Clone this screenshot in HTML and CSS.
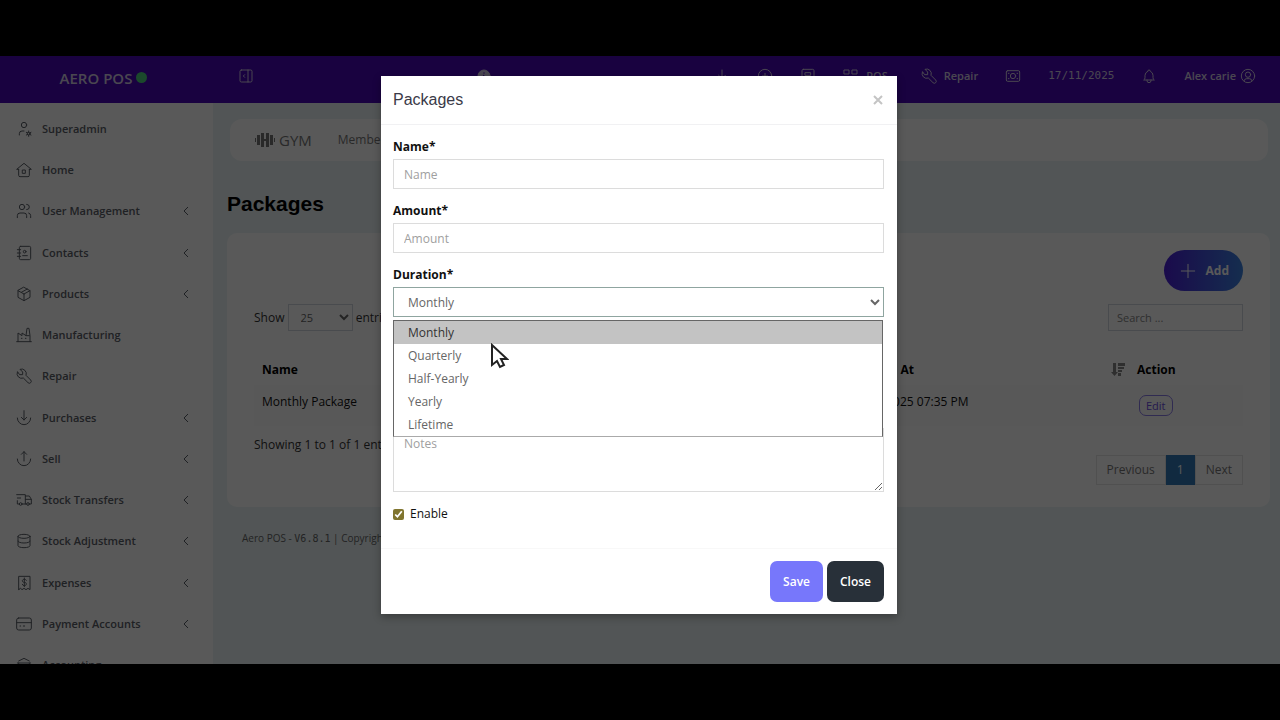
FILE: index.html
```html
<!DOCTYPE html>
<html lang="en">
<head>
<meta charset="utf-8">
<title>Packages - AERO POS</title>
<link rel="stylesheet" href="styles.css">
</head>
<body>
<div class="screen">
  <header class="topbar">
    <div class="brand">AERO POS<span class="status-dot"></span></div>
    <div class="topbar-main">
      <button class="top-btn" type="button" aria-label="Collapse menu"><svg class="icon" viewBox="0 0 24 24"><rect x="3" y="3" width="18" height="18" rx="2"/><path d="M15 3v18M10 10l-2 2l2 2"/></svg></button>
      <button class="top-btn info-btn" type="button" aria-label="Information"><svg class="icon" viewBox="0 0 24 24"><circle class="solid" cx="12" cy="12" r="9"/><path class="info-mark" d="M12 7v1M11 11h1v5M10 17h4"/></svg></button>
      <div class="tools">
        <button class="top-btn" type="button" aria-label="Download"><svg class="icon" viewBox="0 0 24 24"><path d="M12 3v13M7 11l5 5l5-5M4 20h16"/></svg></button>
        <button class="top-btn" type="button" aria-label="New"><svg class="icon" viewBox="0 0 24 24"><circle cx="12" cy="12" r="10"/><path d="M8 12h8M12 8v8"/></svg></button>
        <button class="top-btn" type="button" aria-label="Calculator"><svg class="icon" viewBox="0 0 24 24"><rect x="3" y="2" width="18" height="20" rx="2"/><path d="M8 7h8v4H8z"/></svg></button>
        <button class="top-btn pos-btn" type="button"><svg class="icon" viewBox="0 0 24 24"><path d="M2 3h7v6H2zM14 3h7v6h-7zM2 14h7v6H2zM14 14h7v6h-7z"/></svg>POS</button>
        <button class="top-btn" type="button"><svg class="icon" viewBox="0 0 24 24"><path d="M6 10h4V6L6 2a7 7 0 0 1 9 9l7 7a2 2 0 0 1-4 4l-7-7a7 7 0 0 1-9-9z"/></svg>Repair</button>
        <button class="top-btn" type="button" aria-label="Register"><svg class="icon" viewBox="0 0 24 24"><rect x="2" y="4" width="20" height="16" rx="2"/><circle cx="12" cy="12" r="4"/><path d="M5 8h1M18 16h1M5 16h1M18 8h1"/></svg></button>
        <time class="top-date" datetime="2025-11-17">17/11/2025</time>
        <button class="top-btn" type="button" aria-label="Notifications"><svg class="icon" viewBox="0 0 24 24"><path d="M10 5a2 2 0 1 1 4 0a7 7 0 0 1 4 6v3a4 4 0 0 0 2 4H4a4 4 0 0 0 2-4v-3a7 7 0 0 1 4-6M9 18v1a3 3 0 0 0 6 0v-1"/></svg></button>
        <button class="top-btn user-btn" type="button">Alex carie<svg class="icon" viewBox="0 0 24 24"><circle cx="12" cy="12" r="10"/><circle cx="12" cy="10" r="4"/><path d="M6 19a4 4 0 0 1 4-3h4a4 4 0 0 1 4 3"/></svg></button>
      </div>
    </div>
  </header>

  <div class="layout">
    <nav class="sidebar" aria-label="Main menu">
      <div class="menu-group">
        <a class="menu-item" href="#"><svg class="icon" viewBox="0 0 24 24"><circle cx="12" cy="6" r="4"/><path d="M5 21v-2a4 4 0 0 1 4-4h3"/><circle cx="19" cy="19" r="2"/><path d="M19 15v2M19 21v2M22.500 17l-2 1M17.500 20l-2 1M15.500 17l2 1M20.500 20l2 1"/></svg>Superadmin</a>
        <a class="menu-item" href="#"><svg class="icon" viewBox="0 0 24 24"><path d="M4 11H1L12 2l11 9h-3M4 11v9a2 2 0 0 0 2 2h12a2 2 0 0 0 2-2v-9M10 12h4v5h-4z"/></svg>Home</a>
        <a class="menu-item" href="#"><svg class="icon" viewBox="0 0 24 24"><circle cx="9" cy="6" r="4"/><path d="M2 22v-3a4 4 0 0 1 4-4h6a4 4 0 0 1 4 4v3M16 2a4 4 0 0 1 0 8M22 22v-3a4 4 0 0 0-3-4"/></svg>User Management<svg class="chev" viewBox="0 0 8 12"><path d="M6 2L2 6l4 4"/></svg></a>
      </div>
      <div class="menu-group">
        <a class="menu-item" href="#"><svg class="icon" viewBox="0 0 24 24"><rect x="5" y="2" width="17" height="20" rx="2"/><circle cx="13" cy="10" r="2"/><path d="M10 16h7M2 7h5M2 12h5M2 17h5"/></svg>Contacts<svg class="chev" viewBox="0 0 8 12"><path d="M6 2L2 6l4 4"/></svg></a>
        <a class="menu-item" href="#"><svg class="icon" viewBox="0 0 24 24"><path d="M12 2l9 5v10l-9 5l-9-5V7zM12 12l9-5M12 12v10M12 12L3 7M17 4.500l-9 5"/></svg>Products<svg class="chev" viewBox="0 0 8 12"><path d="M6 2L2 6l4 4"/></svg></a>
        <a class="menu-item" href="#"><svg class="icon" viewBox="0 0 24 24"><path d="M1 22h22M3 22V9l6 4V9l6 4h5M21 22v-9L19.500 2h-3L15 13M8 17h1M14 17h1"/></svg>Manufacturing</a>
        <a class="menu-item" href="#"><svg class="icon" viewBox="0 0 24 24"><path d="M6 10h4V6L6 2a7 7 0 0 1 9 9l7 7a2 2 0 0 1-4 4l-7-7a7 7 0 0 1-9-9z"/></svg>Repair</a>
      </div>
      <div class="menu-group">
        <a class="menu-item" href="#"><svg class="icon" viewBox="0 0 24 24"><path d="M12 1v14M16 11l-4 4l-4-4M2 12a10 10 0 0 0 20 0"/></svg>Purchases<svg class="chev" viewBox="0 0 8 12"><path d="M6 2L2 6l4 4"/></svg></a>
        <a class="menu-item" href="#"><svg class="icon" viewBox="0 0 24 24"><path d="M12 15V1M16 5l-4-4l-4 4M2 12a10 10 0 0 0 20 0"/></svg>Sell<svg class="chev" viewBox="0 0 8 12"><path d="M6 2L2 6l4 4"/></svg></a>
        <a class="menu-item" href="#"><svg class="icon" viewBox="0 0 24 24"><circle cx="7" cy="18" r="2"/><circle cx="18" cy="18" r="2"/><path d="M5 18H2v-5M1 4h13v14M9 18h7M20 18h3v-7h-9M14 6h6l3 5M2 9h5"/></svg>Stock Transfers<svg class="chev" viewBox="0 0 8 12"><path d="M6 2L2 6l4 4"/></svg></a>
        <a class="menu-item" href="#"><svg class="icon" viewBox="0 0 24 24"><ellipse cx="12" cy="5" rx="9" ry="3"/><path d="M3 5v7a9 3 0 0 0 18 0V5M3 12v7a9 3 0 0 0 18 0v-7"/></svg>Stock Adjustment<svg class="chev" viewBox="0 0 8 12"><path d="M6 2L2 6l4 4"/></svg></a>
      </div>
      <div class="menu-group">
        <a class="menu-item" href="#"><svg class="icon" viewBox="0 0 24 24"><path d="M4 22V2h17v20l-3-2l-3 2l-3-2l-3 2l-2-2zM15.500 8a3 3 0 0 0-3-1.500c-4 0-4 4.500 0 4.500s4 5 0 5a3 3 0 0 1-3-2M12.500 4.500v13"/></svg>Expenses<svg class="chev" viewBox="0 0 8 12"><path d="M6 2L2 6l4 4"/></svg></a>
        <a class="menu-item" href="#"><svg class="icon" viewBox="0 0 24 24"><rect x="1" y="3" width="22" height="18" rx="3"/><path d="M1 10h22M6 15h1M11 15h2"/></svg>Payment Accounts<svg class="chev" viewBox="0 0 8 12"><path d="M6 2L2 6l4 4"/></svg></a>
        <a class="menu-item" href="#"><svg class="icon" viewBox="0 0 24 24"><path d="M2 22h20M2 9h20M4 6l8-4l8 4M4 9v13M20 9v13M8 13v4M12 13v4M16 13v4"/></svg>Accounting</a>
      </div>
    </nav>

    <main class="content">
      <nav class="module-nav" aria-label="Gym">
        <a class="module-name" href="#"><svg class="gym-icon" viewBox="0 0 20 16"><path d="M0 6h1v4H0zM2 3h3v10H2zM6 1h3v6h2V1h3v14h-3V9H9v6H6zM15 3h3v10h-3zM19 6h1v4h-1z"/></svg>GYM</a>
        <a class="module-link" href="#">Members</a>
      </nav>
      <h1 class="page-title">Packages</h1>
      <section class="card">
        <div class="card-actions">
          <button class="add-btn" type="button"><svg class="icon" viewBox="0 0 24 24"><path d="M12 2v20M2 12h20"/></svg>Add</button>
        </div>
        <div class="table-tools">
          <label class="page-size">Show <select class="size-select"><option>25</option></select> entries</label>
          <input class="search" type="search" placeholder="Search ..." aria-label="Search">
        </div>
        <table class="table">
          <thead><tr><th>Name</th><th class="col-date"><span class="sortable">Created At<svg class="sort-icon" viewBox="0 0 14 14"><path d="M2 0h3v9h2l-3.500 4L0 9h2zM7 0h7v3H7zM7 4h6v2H7zM7 7h4v2H7zM7 10h3v3H7z"/></svg></span></th><th class="col-action">Action</th></tr></thead>
          <tbody><tr><td>Monthly Package</td><td>17/11/2025 07:35 PM</td><td class="cell-action"><button class="edit-btn" type="button">Edit</button></td></tr></tbody>
        </table>
        <p class="summary">Showing 1 to 1 of 1 entries</p>
        <div class="pager"><a href="#">Previous</a><a class="current" href="#">1</a><a href="#">Next</a></div>
      </section>
      <footer class="page-footer">Aero POS - <span class="version">V6.8.1</span> | Copyright</footer>
    </main>
  </div>

  <div class="backdrop">
    <form class="modal" role="dialog" aria-labelledby="modal-title">
      <div class="modal-header">
        <h2 class="modal-title" id="modal-title">Packages</h2>
        <button class="dismiss" type="button" aria-label="Dismiss"><svg viewBox="0 0 10 10"><path d="M1 1l8 8M9 1l-8 8"/></svg></button>
      </div>
      <div class="modal-body">
        <div class="field"><label for="name">Name*</label><input class="control" id="name" type="text" placeholder="Name"></div>
        <div class="field"><label for="amount">Amount*</label><input class="control" id="amount" type="text" placeholder="Amount"></div>
        <div class="field duration">
          <label for="duration">Duration*</label>
          <select class="control control-select" id="duration"><option>Monthly</option><option>Quarterly</option><option>Half-Yearly</option><option>Yearly</option><option>Lifetime</option></select>
          <ul class="options" role="listbox" aria-label="Duration">
            <li class="option active" role="option" aria-selected="true">Monthly</li>
            <li class="option" role="option">Quarterly</li>
            <li class="option" role="option">Half-Yearly</li>
            <li class="option" role="option">Yearly</li>
            <li class="option" role="option">Lifetime</li>
          </ul>
          <svg class="pointer" viewBox="0 0 18 26"><path d="M1 2v20l5-4l3 6l4-2l-3-6h6z"/></svg>
        </div>
        <div class="field notes"><textarea class="control control-area" placeholder="Notes" aria-label="Notes"></textarea></div>
        <label class="check"><input type="checkbox" checked>Enable</label>
      </div>
      <div class="modal-footer">
        <button class="btn btn-save" type="submit">Save</button>
        <button class="btn btn-close" type="button">Close</button>
      </div>
    </form>
  </div>
</div>
</body>
</html>
```
FILE: styles.css
```css
* { box-sizing: border-box; }

body {
  margin: 0;
  padding: 56px 0;
  height: 100vh;
  background: #000;
  color: #111;
  font: 12px/20px "Open Sans", "Noto Sans", sans-serif;
  overflow: hidden;
}

button, input, select, textarea { font: inherit; color: inherit; }
button { cursor: pointer; }
a { color: inherit; text-decoration: none; }

.screen {
  position: relative;
  display: flex;
  flex-direction: column;
  height: 100%;
  overflow: hidden;
  background: #eaf4f6;
}

.icon {
  width: 16px;
  height: 16px;
  flex: none;
  fill: none;
  stroke: currentColor;
  stroke-width: 1.500;
  stroke-linecap: round;
  stroke-linejoin: round;
}

/* Top bar */
.topbar {
  display: flex;
  flex: none;
  height: 47px;
  background: #4806b8;
  color: #d4cce5;
  font-weight: 600;
  font-size: 11px;
}
.brand {
  display: flex;
  align-items: center;
  justify-content: center;
  gap: 4px;
  width: 213px;
  padding: 0 6px 4px 0;
  font-size: 15px;
}
.status-dot {
  width: 11px;
  height: 11px;
  border-radius: 50%;
  background: #4fd07f;
}
.topbar-main {
  display: flex;
  flex: 1;
  align-items: center;
  padding: 0 14px 8px 15px;
}
.top-btn {
  display: flex;
  align-items: center;
  gap: 7px;
  height: 30px;
  padding: 0 10px;
  border: 0;
  border-radius: 6px;
  background: none;
}
.info-btn { margin-left: 202px; }
.info-btn .solid { fill: currentColor; }
.info-btn .info-mark { stroke: #4806b8; }
.user-btn { gap: 4px; }
.pos-btn { margin-right: 6px; }
.tools {
  display: flex;
  align-items: center;
  gap: 7px;
  margin-left: auto;
}
.top-date {
  padding: 0 10px;
  font: 11px/20px "DejaVu Sans Mono", monospace;
}

/* Sidebar */
.layout {
  display: flex;
  flex: 1;
  min-height: 0;
}
.sidebar {
  display: flex;
  flex: none;
  flex-direction: column;
  gap: 1px;
  width: 213px;
  padding-top: 5px;
  overflow: hidden;
  background: #fff;
  color: #5b6068;
}
.menu-item {
  display: flex;
  align-items: center;
  gap: 10px;
  height: 41px;
  padding: 0 23px 0 16px;
  font-size: 11px;
  font-weight: 600;
}
.chev {
  width: 8px;
  height: 12px;
  margin-left: auto;
  fill: none;
  stroke: currentColor;
  stroke-width: 1;
}

/* Page content */
.content {
  flex: 1;
  min-width: 0;
  padding: 16px 10px 0 14px;
}
.module-nav {
  display: flex;
  align-items: center;
  gap: 26px;
  height: 42px;
  margin: 0 2px 0 3px;
  padding: 0 25px;
  border-radius: 12px;
  background: #fff;
  color: #777;
}
.module-name {
  display: flex;
  align-items: center;
  gap: 4px;
  font-size: 15px;
}
.gym-icon {
  width: 20px;
  height: 16px;
  fill: currentColor;
}
.page-title {
  margin: 30px 0 17px;
  font: bold 21px/25px "Liberation Sans", Arial, sans-serif;
  color: #000;
}
.card {
  padding: 17px 27px 22px;
  border-radius: 10px;
  background: #fff;
}
.card-actions {
  display: flex;
  justify-content: flex-end;
}
.add-btn {
  display: flex;
  align-items: center;
  gap: 10px;
  height: 41px;
  padding: 0 14px 0 16px;
  border: 0;
  border-radius: 21px;
  background: linear-gradient(90deg, #4b1fd8, #3b82e0);
  color: #fff;
  font-weight: 700;
}
.table-tools {
  display: flex;
  align-items: center;
  justify-content: space-between;
  margin: 13px 0 23px;
}
.page-size { color: #333; }
.size-select {
  width: 65px;
  height: 27px;
  padding: 0 0 0 8px;
  border: 1px solid #d2d6de;
  background: #fff;
  color: #666;
  font-size: 11px;
}
.search {
  width: 135px;
  height: 27px;
  padding: 0 8px;
  border: 1px solid #d2d6de;
  background: #fff;
  font-size: 11px;
}
.search::placeholder { color: #888; }
.table {
  width: 100%;
  border-collapse: collapse;
  table-layout: fixed;
}
.table th, .table td {
  height: 31px;
  padding: 0 8px;
  text-align: left;
}
.table th { color: #000; }
.table td {
  height: 41px;
  padding-bottom: 7px;
  background: #fcfcfc;
}
.table .cell-action { padding: 0 10px; }
.col-date { width: 287px; }
.col-action { width: 114px; }
.sortable {
  display: flex;
  align-items: center;
  justify-content: space-between;
}
.sort-icon {
  width: 14px;
  height: 14px;
  margin-right: -4px;
  fill: #888;
}
.edit-btn {
  height: 21px;
  padding: 0 6px;
  border: 1px solid #8b7be8;
  border-radius: 7px;
  background: none;
  color: #6a4be0;
  font-size: 11px;
  line-height: 18px;
}
.summary {
  margin: 9px 0 0;
  color: #333;
}
.pager {
  display: flex;
  justify-content: flex-end;
  color: #777;
}
.pager a {
  padding: 4px 10px;
  border: 1px solid #e4e4e4;
}
.pager .current {
  border-color: #337ab7;
  background: #337ab7;
  color: #fff;
}
.page-footer {
  padding: 21px 15px;
  color: #666;
  font-size: 10px;
}
.version { font-family: "DejaVu Sans Mono", monospace; }

/* Dialog */
.backdrop {
  position: absolute;
  inset: 0;
  display: flex;
  align-items: flex-start;
  justify-content: center;
  padding: 20px 2px 0 0;
  background: rgba(0, 0, 0, .65);
}
.modal {
  width: 516px;
  max-width: 100%;
  background: #fff;
  box-shadow: 0 3px 8px rgba(0, 0, 0, .3);
}
.modal-header {
  display: flex;
  align-items: center;
  justify-content: space-between;
  height: 49px;
  padding: 0 13px 0 12px;
  border-bottom: 1px solid #f1f1f3;
}
.modal-title {
  margin: 0;
  font: 16px/20px "Liberation Sans", Arial, sans-serif;
  color: #3a3a48;
}
.dismiss {
  display: flex;
  padding: 1px;
  border: 0;
  background: none;
}
.dismiss svg {
  width: 10px;
  height: 10px;
  stroke: #c4c4c4;
  stroke-width: 2;
}
.modal-body { padding: 14px 13px 24px 12px; }
.field {
  display: flex;
  flex-direction: column;
  gap: 4px;
  margin-bottom: 14px;
}
.field label {
  line-height: 16px;
  font-weight: 700;
}
.control {
  width: 100%;
  height: 30px;
  margin: 0;
  padding: 0 10px;
  border: 1px solid #dcdcdc;
  border-radius: 0;
  background: #fff;
  color: #666;
}
.control::placeholder { color: #a0a0a0; }
.control-select {
  padding-right: 0;
  border-color: #8fa5a0;
}
.duration {
  position: relative;
  margin-bottom: 0;
}
.options {
  position: absolute;
  top: 53px;
  left: 0;
  right: 1px;
  z-index: 1;
  margin: 0;
  padding: 0;
  border: 1px solid #666;
  border-bottom-color: #aaa;
  background: #fff;
  list-style: none;
}
.option {
  padding-left: 14px;
  color: #666;
  line-height: 23px;
}
.option.active {
  background: #c3c3c3;
  color: #333;
}
.pointer {
  position: absolute;
  z-index: 2;
  top: 76px;
  left: 98px;
  width: 18px;
  height: 26px;
  fill: #fff;
  stroke: #222;
  stroke-width: 2;
}
.notes {
  justify-content: flex-end;
  min-height: 175px;
  margin-bottom: 12px;
}
.control-area {
  height: 64px;
  padding: 5px 10px;
  resize: vertical;
}
.check {
  display: flex;
  align-items: center;
  gap: 6px;
}
.check input {
  width: 11px;
  height: 11px;
  margin: 0;
  accent-color: #80752f;
}
.modal-footer {
  display: flex;
  justify-content: flex-end;
  gap: 4px;
  padding: 12px 13px;
  border-top: 1px solid #f8f8f8;
}
.btn {
  height: 41px;
  padding: 0 13px;
  border: 0;
  border-radius: 7px;
  color: #fff;
  font-weight: 600;
}
.btn-save { background: #7777fb; }
.btn-close { background: #283039; }
```
